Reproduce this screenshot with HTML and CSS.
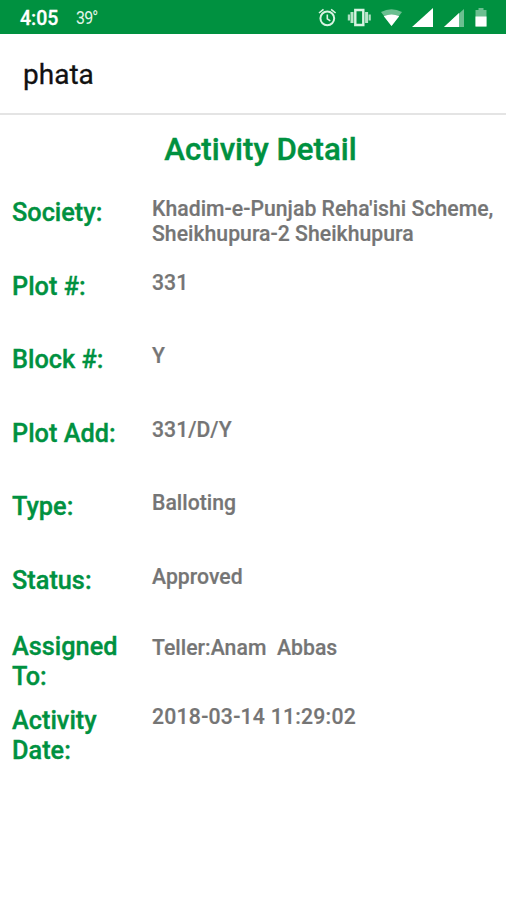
FILE: index.html
```html
<!DOCTYPE html>
<html lang="en">
<head>
<meta charset="utf-8">
<title>phata</title>
<link rel="stylesheet" href="styles.css">
</head>
<body>
<header class="status">
  <span class="time">4:05</span><span class="temp">39°</span>
  <svg class="icons" width="190" height="34" viewBox="0 0 190 34" fill="none" stroke="#fff">
    <g stroke="#d9f3e2">
      <circle cx="11.300" cy="18.300" r="6.900" stroke-width="2"/>
      <path d="M11.300 14.500v4.300l3 2M3 13l4.500-3.700M19.600 13l-4.500-3.700" stroke-width="1.600"/>
      <path d="M39.300 10h8v15h-8z" stroke-width="2.400"/>
      <path d="M36 12v11M50.600 12v11" stroke-width="3" stroke-opacity=".85"/>
      <path d="M32.900 14.500v6M53.700 14.500v6" stroke-width="2.200" stroke-opacity=".8"/>
    </g>
    <path d="M65 12q10.500-5.500 21 0L75.500 26z" fill="#fff" fill-opacity=".42" stroke="none"/>
    <path d="M67.800 16.300q7.700-3.500 15.400 0L75.500 26z" fill="#fff" stroke="none"/>
    <path d="M96 27h21V8z" fill="#fff" stroke="none"/>
    <path d="M128 27h20V9z" fill="#fff" fill-opacity=".42" stroke="none"/>
    <path d="M128 27h15V13z" fill="#fff" stroke="none"/>
    <path d="M159.500 10h3V8h5v2h3v16.500h-11z" fill="#fff" fill-opacity=".42" stroke="none"/>
    <path d="M159.500 16.500h11v10h-11z" fill="#fff" stroke="none"/>
  </svg>
</header>
<div class="appbar">phata</div>
<main>
  <h1>Activity Detail</h1>
  <dl>
    <div class="row"><dt>Society:</dt><dd>Khadim-e-Punjab Reha'ishi Scheme, Sheikhupura-2 Sheikhupura</dd></div>
    <div class="row"><dt>Plot #:</dt><dd>331</dd></div>
    <div class="row"><dt>Block #:</dt><dd>Y</dd></div>
    <div class="row"><dt>Plot Add:</dt><dd>331/D/Y</dd></div>
    <div class="row"><dt>Type:</dt><dd>Balloting</dd></div>
    <div class="row"><dt>Status:</dt><dd>Approved</dd></div>
    <div class="row tall"><dt>Assigned To:</dt><dd>Teller:Anam&nbsp; Abbas</dd></div>
    <div class="row tall last"><dt>Activity Date:</dt><dd>2018-03-14 11:29:02</dd></div>
  </dl>
</main>
</body>
</html>
```
FILE: styles.css
```css
* { box-sizing: border-box; }
body { margin: 0; height: 900px; background: #fff; font-family: Roboto, sans-serif; overflow: hidden; }
.status { height: 34px; background: #009140; color: #fff; display: flex; align-items: center; padding-left: 20px; }
.time { font-size: 19.5px; font-weight: 500; -webkit-text-stroke: .3px #fff; width: 56px; padding-top: 2px; }
.temp { font-size: 19px; letter-spacing: -1px; transform: scaleX(.84); transform-origin: left; color: #e3f5e9; }
.icons { margin-left: auto; }
.appbar { height: 81px; border-bottom: 2px solid #e4e4e4; padding-left: 23px; line-height: 82px; font-size: 28px; font-weight: 400; color: #111; -webkit-text-stroke: .3px #111; }
h1 { margin: 0; padding-top: 16px; height: 75px; line-height: 38px; font-size: 31.2px; font-weight: 500; color: #009140; -webkit-text-stroke: .4px #009140; text-align: center; padding-left: 15px; }
dl { margin: 0; }
.row { display: grid; grid-template-columns: 140px 1fr; height: 73.6px; padding-left: 12px; }
dt { font-size: 25.3px; line-height: 30px; font-weight: 500; color: #009140; -webkit-text-stroke: .35px #009140; padding-top: 8px; }
dd { margin: 0; font-size: 21.2px; line-height: 25px; font-weight: 500; color: #757575; -webkit-text-stroke: .2px #757575; letter-spacing: .03px; padding-top: 6px; }
.tall dt { padding-top: 0; }
.tall dd { padding-top: 3px; }
.last dt { padding-top: 1px; }
.last dd { padding-top: 0; margin-top: -1px; letter-spacing: .24px; }
```
